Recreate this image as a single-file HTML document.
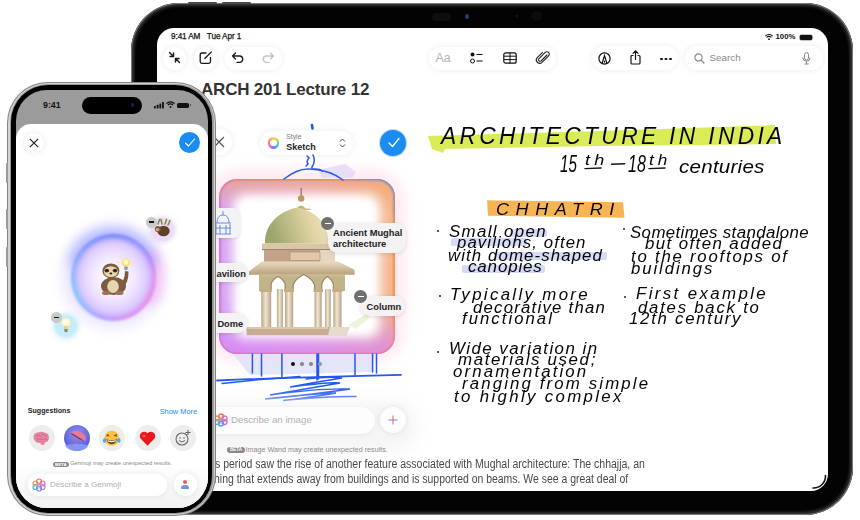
<!DOCTYPE html>
<html><head><meta charset="utf-8">
<style>
*{margin:0;padding:0;box-sizing:border-box}
html,body{width:860px;height:520px;overflow:hidden;background:#fff;font-family:"Liberation Sans",sans-serif;position:relative}
.a{position:absolute}
.nw{white-space:nowrap;line-height:1}
#ipad{left:131px;top:3px;width:722px;height:512px;border-radius:48px;background:#030303;box-shadow:inset 0 0 0 1px #7a7a7a,inset 0 0 3px 3px #383838}
#iscr{left:157px;top:28px;width:671px;height:463px;border-radius:17px;overflow:hidden;background:#fff}
#iin{left:-157px;top:-28px;width:860px;height:520px}
#iph{left:7px;top:82px;width:209px;height:434px;border-radius:41px;background:#858585}
#iph1{left:8px;top:83px;width:207px;height:432px;border-radius:40px;background:#d4d4d4}
#iph2{left:9.5px;top:84px;width:204px;height:430px;border-radius:38px;background:#9a9a9a}
#iphb{left:11px;top:85px;width:201px;height:427.5px;border-radius:37px;background:#000}
#pscr{left:16px;top:90px;width:192px;height:418px;border-radius:31px;overflow:hidden;background:#9b9b9b}
#pin{left:-16px;top:-90px;width:860px;height:520px}
.btn{border-radius:50%;background:#fff;box-shadow:0 0 6px rgba(0,0,0,.09)}
.pill{background:#fff;box-shadow:0 0 6px rgba(0,0,0,.08)}
.hw{font-family:"Liberation Sans",sans-serif;font-style:italic;color:#050505;white-space:nowrap;line-height:1;transform-origin:0 0}
svg{position:absolute;overflow:visible}
.lab{background:#f4f2f3;border-radius:10px;box-shadow:0 1px 4px rgba(0,0,0,.12);font-weight:bold;color:#222;font-size:9.3px}
.minus{width:13px;height:13px;border-radius:50%;background:#707070}
.minus:after{content:"";position:absolute;left:3.5px;top:6px;width:6px;height:1.3px;background:#fff}
</style></head><body>

<!-- iPad -->
<div id="ipad" class="a"></div>
<div class="a" style="left:187.5px;top:1.8px;width:29px;height:2px;border-radius:1px;background:#4a4a4a"></div>
<div class="a" style="left:222.3px;top:1.8px;width:29px;height:2px;border-radius:1px;background:#4a4a4a"></div>
<div class="a" style="left:465px;top:14px;width:4px;height:5px;border-radius:50%;background:#2a3a80"></div>
<div class="a" style="left:432px;top:12.5px;width:19px;height:8px;border-radius:4px;background:#0e0e0e"></div>
<div class="a" style="left:516px;top:15px;width:2px;height:2px;border-radius:50%;background:#1e1e1e"></div>
<div class="a" style="left:531px;top:11px;width:11px;height:10px;border-radius:50%;background:#0c0c0c"></div>
<div id="iscr" class="a"><div id="iin" class="a">
  <!-- status -->
  <div class="a nw" style="left:171px;top:32.5px;font-size:8.2px;color:#111;letter-spacing:-0.1px;-webkit-text-stroke:0.25px #111">9:41 AM&nbsp;&nbsp;&nbsp;Tue Apr 1</div>
  <svg style="left:765px;top:34px" width="8" height="6" viewBox="0 0 8 6"><path d="M0.3 2.2 A5 5 0 0 1 7.7 2.2 M1.6 3.5 A3.2 3.2 0 0 1 6.4 3.5" stroke="#111" stroke-width="1.1" fill="none"/><circle cx="4" cy="5.2" r="0.9" fill="#111"/></svg>
  <div class="a nw" style="left:775.5px;top:33px;font-size:7.8px;font-weight:bold;color:#111">100%</div>
  <div class="a" style="left:799.5px;top:34.5px;width:12px;height:5.3px;border-radius:1.2px;background:#111;box-shadow:0 0 0 0.6px #888"></div>
  <div class="a" style="left:812px;top:36px;width:1px;height:2.5px;background:#999"></div>
  <!-- toolbar -->
  <div class="a btn" style="left:163px;top:46.5px;width:23px;height:23px"></div>
  <svg style="left:168px;top:51px" width="13" height="13" viewBox="0 0 13 13"><path d="M1.5 1.5 L5.5 5.5 M5.5 2 V5.5 H2 M11.5 11.5 L7.5 7.5 M7.5 11 V7.5 H11" stroke="#1a1a1a" stroke-width="1.4" fill="none" stroke-linecap="round" stroke-linejoin="round"/></svg>
  <div class="a btn" style="left:194px;top:46.5px;width:23px;height:23px"></div>
  <svg style="left:199px;top:51px" width="13" height="13" viewBox="0 0 13 13"><path d="M7 2 H3 Q1.2 2 1.2 3.8 V10.5 Q1.2 12.3 3 12.3 H9.7 Q11.5 12.3 11.5 10.5 V6.5" stroke="#1a1a1a" stroke-width="1.3" fill="none" stroke-linecap="round"/><path d="M5.8 7.5 L12.3 1" stroke="#1a1a1a" stroke-width="1.3" stroke-linecap="round"/></svg>
  <div class="a pill" style="left:225px;top:46.5px;width:57px;height:23px;border-radius:12px"></div>
  <svg style="left:231px;top:51px" width="14" height="13" viewBox="0 0 14 13"><path d="M4.5 2 L1.5 5 L4.5 8 M1.5 5 H8.5 A3.2 3.2 0 0 1 8.5 11.4 H6" stroke="#1a1a1a" stroke-width="1.4" fill="none" stroke-linecap="round" stroke-linejoin="round"/></svg>
  <svg style="left:261px;top:51px" width="14" height="13" viewBox="0 0 14 13"><path d="M9.5 2 L12.5 5 L9.5 8 M12.5 5 H5.5 A3.2 3.2 0 0 0 5.5 11.4 H8" stroke="#c4c4c4" stroke-width="1.4" fill="none" stroke-linecap="round" stroke-linejoin="round"/></svg>

  <div class="a pill" style="left:429px;top:46.5px;width:127px;height:23px;border-radius:12px"></div>
  <div class="a nw" style="left:435.5px;top:52px;font-size:12.4px;color:#b4b4b4">Aa</div>
  <svg style="left:470px;top:52px" width="14" height="12" viewBox="0 0 14 12"><circle cx="2.5" cy="2.5" r="2" fill="#111"/><circle cx="2.5" cy="9" r="2" stroke="#111" stroke-width="1" fill="none"/><path d="M6.5 2.5 H12.5 M6.5 9 H12.5" stroke="#111" stroke-width="1.2"/></svg>
  <svg style="left:503px;top:52px" width="14" height="12" viewBox="0 0 14 12"><rect x="0.8" y="0.8" width="12.4" height="10.4" rx="2" stroke="#111" stroke-width="1.2" fill="none"/><path d="M0.8 4.2 H13.2 M0.8 7.6 H13.2 M7 0.8 V11.2" stroke="#111" stroke-width="1"/></svg>
  <svg style="left:536px;top:51px" width="14" height="14" viewBox="0 0 14 14"><path d="M11 4 L5 10 A1.6 1.6 0 0 1 2.8 7.8 L9.2 1.4 A2.4 2.4 0 0 1 12.6 4.8 L6 11.4 A3.4 3.4 0 0 1 1.2 6.6 L6.5 1.3" stroke="#222" stroke-width="1.1" fill="none" stroke-linecap="round"/></svg>

  <div class="a pill" style="left:592px;top:46px;width:86px;height:24px;border-radius:12px"></div>
  <svg style="left:598px;top:52px" width="13" height="13" viewBox="0 0 13 13"><circle cx="6.5" cy="6.5" r="5.6" stroke="#111" stroke-width="1.2" fill="none"/><path d="M4.2 11 L6.5 3.5 L8.8 11" stroke="#111" stroke-width="1.2" fill="none"/><path d="M5.6 8.8 L6.5 11.5 L7.4 8.8Z" fill="#111"/></svg>
  <svg style="left:630px;top:50px" width="11" height="15" viewBox="0 0 11 15"><path d="M3.5 5.5 H2 Q1 5.5 1 6.5 V13 Q1 14 2 14 H9 Q10 14 10 13 V6.5 Q10 5.5 9 5.5 H7.5" stroke="#111" stroke-width="1.2" fill="none"/><path d="M5.5 9.5 V1 M3 3.3 L5.5 0.8 L8 3.3" stroke="#111" stroke-width="1.2" fill="none" stroke-linecap="round"/></svg>
  <div class="a" style="left:660px;top:57.5px;width:2.5px;height:2.5px;border-radius:50%;background:#111;box-shadow:4.5px 0 0 #111,9px 0 0 #111"></div>

  <div class="a pill" style="left:685px;top:46px;width:138px;height:24px;border-radius:12px"></div>
  <svg style="left:694px;top:52.5px" width="11" height="11" viewBox="0 0 11 11"><circle cx="4.5" cy="4.5" r="3.6" stroke="#8a8a8a" stroke-width="1.2" fill="none"/><path d="M7.2 7.2 L10 10" stroke="#8a8a8a" stroke-width="1.3" stroke-linecap="round"/></svg>
  <div class="a nw" style="left:709.5px;top:53.3px;font-size:9.9px;color:#8a8a8a">Search</div>
  <svg style="left:802px;top:51.5px" width="9" height="13" viewBox="0 0 9 13"><rect x="2.5" y="0.6" width="4" height="7.4" rx="2" stroke="#888" stroke-width="1" fill="none"/><path d="M0.8 5.5 A3.7 3.7 0 0 0 8.2 5.5 M4.5 9.2 V12 M2.5 12 H6.5" stroke="#888" stroke-width="1" fill="none"/></svg>

  <!-- title -->
  <div class="a nw" style="left:201px;top:80.5px;font-size:17px;font-weight:bold;color:#333;letter-spacing:-0.2px">ARCH 201 Lecture 12</div>

  <!-- highlighters -->
  <svg style="left:0;top:0" width="860" height="520"><path d="M428 136 L600 131 L775 125 L776 144 L600 146 L445 149 L443 153 L432 149 Z" fill="#d9ec58"/></svg>
  <svg style="left:0;top:0" width="860" height="520"><path d="M487 200.3 L623 202.3 L624.5 217.7 L488 215.7 Z" fill="#f6b552"/></svg>

  <!-- handwriting -->
  <div class="a" style="left:509.5px;top:229px;width:37.5px;height:7.8px;background:#d6dbf8;border-radius:2px"></div>
  <div class="a" style="left:451px;top:238px;width:76px;height:7.6px;background:#d6dbf8;border-radius:2px"></div>
  <div class="a" style="left:494px;top:252px;width:112.8px;height:7.8px;background:#d6dbf8;border-radius:2px"></div>
  <div class="a" style="left:462px;top:265.3px;width:83px;height:7.7px;background:#d6dbf8;border-radius:2px"></div>
  <div class="a" style="left:436.8px;top:229.7px;width:2px;height:2px;border-radius:50%;background:#222"></div>
  <div class="a" style="left:439px;top:295px;width:2px;height:2px;border-radius:50%;background:#222"></div>
  <div class="a" style="left:436.5px;top:350.7px;width:2px;height:2px;border-radius:50%;background:#222"></div>
  <div class="a" style="left:623.3px;top:227.9px;width:2px;height:2px;border-radius:50%;background:#222"></div>
  <div class="a" style="left:623.8px;top:295.8px;width:2px;height:2px;border-radius:50%;background:#222"></div>
  <!--HW-->
  <div class="a hw" style="left:441.0px;top:122.7px;font-size:19px;letter-spacing:2.78px;transform:scale(1.199,1.3)">ARCHITECTURE IN INDIA</div>
  <div class="a hw" style="left:679.3px;top:156.9px;font-size:17px;letter-spacing:0.20px;transform:scale(1.210,1.13)">centuries</div>
  <div class="a hw" style="left:495.5px;top:199.9px;font-size:15px;letter-spacing:5.50px;transform:scale(1.200,1.14)">CHHATRI</div>
  <div class="a hw" style="left:448.7px;top:223.3px;font-size:14px;letter-spacing:1.13px;transform:scale(1.203,1.16)">Small open</div>
  <div class="a hw" style="left:456.5px;top:233.7px;font-size:14px;letter-spacing:0.92px;transform:scale(1.198,1.16)">pavilions, often</div>
  <div class="a hw" style="left:447.6px;top:247.0px;font-size:14px;letter-spacing:0.93px;transform:scale(1.199,1.16)">with dome-shaped</div>
  <div class="a hw" style="left:467.6px;top:258.0px;font-size:14px;letter-spacing:0.68px;transform:scale(1.215,1.16)">canopies</div>
  <div class="a hw" style="left:449.8px;top:286.0px;font-size:14px;letter-spacing:1.94px;transform:scale(1.203,1.16)">Typically more</div>
  <div class="a hw" style="left:473.1px;top:299.2px;font-size:14px;letter-spacing:1.04px;transform:scale(1.195,1.16)">decorative than</div>
  <div class="a hw" style="left:462.0px;top:310.3px;font-size:14px;letter-spacing:1.72px;transform:scale(1.192,1.16)">functional</div>
  <div class="a hw" style="left:448.8px;top:339.8px;font-size:14px;letter-spacing:1.22px;transform:scale(1.205,1.16)">Wide variation in</div>
  <div class="a hw" style="left:458.0px;top:350.5px;font-size:14px;letter-spacing:1.34px;transform:scale(1.208,1.16)">materials used;</div>
  <div class="a hw" style="left:452.7px;top:363.4px;font-size:14px;letter-spacing:1.77px;transform:scale(1.203,1.16)">ornamentation</div>
  <div class="a hw" style="left:462.0px;top:374.6px;font-size:14px;letter-spacing:1.78px;transform:scale(1.200,1.16)">ranging from simple</div>
  <div class="a hw" style="left:454.2px;top:388.0px;font-size:14px;letter-spacing:1.95px;transform:scale(1.201,1.16)">to highly complex</div>
  <div class="a hw" style="left:630.1px;top:223.5px;font-size:14px;letter-spacing:0.33px;transform:scale(1.202,1.16)">Sometimes standalone</div>
  <div class="a hw" style="left:645.2px;top:235.1px;font-size:14px;letter-spacing:1.17px;transform:scale(1.204,1.16)">but often added</div>
  <div class="a hw" style="left:631.2px;top:248.0px;font-size:14px;letter-spacing:1.47px;transform:scale(1.199,1.16)">to the rooftops of</div>
  <div class="a hw" style="left:631.3px;top:259.6px;font-size:14px;letter-spacing:1.60px;transform:scale(1.197,1.16)">buildings</div>
  <div class="a hw" style="left:636.0px;top:285.1px;font-size:14px;letter-spacing:1.96px;transform:scale(1.206,1.16)">First example</div>
  <div class="a hw" style="left:638.3px;top:298.7px;font-size:14px;letter-spacing:1.48px;transform:scale(1.197,1.16)">dates back to</div>
  <div class="a hw" style="left:629.0px;top:310.3px;font-size:14px;letter-spacing:1.45px;transform:scale(1.199,1.16)">12th century</div>
  <!--/HW-->
  <div class="a hw" style="left:559.8px;top:152.1px;font-size:21px;transform:scale(0.726,1.107)">15</div>
  <div class="a hw" style="left:627.6px;top:152.1px;font-size:21px;transform:scale(0.765,1.107)">18</div>
  <div class="a hw" style="left:584.9px;top:153.1px;font-size:13px;letter-spacing:3px;transform:scale(1.39,1.08)">th</div>
  <div class="a hw" style="left:649.2px;top:153.1px;font-size:13px;letter-spacing:3px;transform:scale(1.325,1.08)">th</div>
  <svg style="left:0;top:0" width="860" height="520"><path d="M585 168.6 L601 168 M649 168.6 L665 168 M611.6 164.3 L624.7 163.8" stroke="#151515" stroke-width="1.4" stroke-linecap="round"/></svg>
  <!-- image wand panel -->
  <div class="a btn" style="left:206px;top:129px;width:26px;height:26px"></div>
  <svg style="left:213px;top:136px" width="12" height="12" viewBox="0 0 12 12"><path d="M1 1 L11 11 M11 1 L1 11" stroke="#555" stroke-width="1.2"/></svg>
  <div class="a pill" style="left:260px;top:130.5px;width:93px;height:24.5px;border-radius:12.5px"></div>
  <div class="a" style="left:267.5px;top:137px;width:11.5px;height:11.5px;border-radius:50%;background:conic-gradient(#ffd84a,#9be05a,#4ac0f0,#7a7af0,#f070c0,#ff8a50,#ffd84a)"></div>
  <div class="a" style="left:270px;top:139.5px;width:6.5px;height:6.5px;border-radius:50%;background:#fff"></div>
  <div class="a nw" style="left:286.3px;top:134px;font-size:6.8px;color:#7a7a7a">Style</div>
  <div class="a nw" style="left:286.3px;top:142.5px;font-size:9px;font-weight:bold;color:#1e1e1e">Sketch</div>
  <svg style="left:339px;top:138px" width="7" height="10" viewBox="0 0 7 10"><path d="M1 3.5 L3.5 1 L6 3.5 M1 6.5 L3.5 9 L6 6.5" stroke="#444" stroke-width="1" fill="none"/></svg>
  <div class="a" style="left:380.3px;top:129.7px;width:26px;height:26px;border-radius:50%;background:#1b8df2;box-shadow:0 0 0 1px rgba(20,100,200,.25)"></div>
  <svg style="left:386.5px;top:136px" width="14" height="13" viewBox="0 0 14 13"><path d="M2 7 L5.5 10.5 L12 2.5" stroke="#fff" stroke-width="1.3" fill="none" stroke-linecap="round" stroke-linejoin="round"/></svg>

  <!-- card glow + border -->
  <div class="a" style="left:208px;top:170px;width:196px;height:192px;border-radius:30px;background:rgba(255,205,225,.45);filter:blur(7px)"></div>
  <div class="a" style="left:218.5px;top:178.5px;width:176px;height:175px;border-radius:18px;background:linear-gradient(90deg,#c878e0 0%,#f08070 30%,#f48a58 70%,#f59050 100%)"></div>
  <div class="a" style="left:218.5px;top:178.5px;width:176px;height:175px;border-radius:18px;background:linear-gradient(180deg,rgba(245,130,70,.5) 0%,rgba(0,0,0,0) 20%,rgba(0,0,0,0) 75%,rgba(220,110,220,.8) 100%)"></div>
  <div class="a" style="left:345px;top:178.5px;width:49.5px;height:60px;border-radius:0 18px 0 0;background:linear-gradient(215deg,#5a90e0 0%,rgba(90,144,224,0) 55%)"></div>
  <div class="a" style="left:220.5px;top:181px;width:172px;height:170.5px;border-radius:16px;background:linear-gradient(90deg,#d6a6f4 0%,#e4b4e4 45%,#f6b888 100%);filter:blur(1px)"></div>
  <div class="a" style="left:220.5px;top:181px;width:172px;height:170.5px;border-radius:16px;background:linear-gradient(180deg,rgba(246,160,110,.6) 0%,rgba(246,160,110,0) 18%,rgba(214,140,244,0) 70%,rgba(214,130,244,.75) 100%);filter:blur(1px)"></div>
  <div class="a" style="left:233px;top:194px;width:147px;height:144px;border-radius:12px;background:#fff;filter:blur(6px)"></div>
  <div class="a" style="left:240px;top:201px;width:133px;height:130px;border-radius:10px;background:#fff;filter:blur(4px)"></div>
  <!-- chhatri -->
  <svg style="left:0;top:0" width="860" height="520">
    <defs>
      <linearGradient id="dome" x1="0" x2="1" y1="0.2" y2="0"><stop offset="0" stop-color="#9ca66a"/><stop offset="0.35" stop-color="#c2c08a"/><stop offset="0.65" stop-color="#e2d4a4"/><stop offset="1" stop-color="#efe4c4"/></linearGradient>
      <linearGradient id="pil" x1="0" x2="1" y1="0" y2="0"><stop offset="0" stop-color="#b9a488"/><stop offset="0.45" stop-color="#f0e6d2"/><stop offset="1" stop-color="#b8a084"/></linearGradient>
      <linearGradient id="eave" x1="0" x2="0" y1="0" y2="1"><stop offset="0" stop-color="#eadcc0"/><stop offset="1" stop-color="#b8a07c"/></linearGradient>
    </defs>
    <path d="M301.2 188 V200" stroke="#8a7048" stroke-width="1.2"/>
    <circle cx="301.2" cy="198.5" r="3.2" fill="#b89a68"/>
    <path d="M296 209 Q301 202 306 209 Z" fill="#c8b080"/>
    <path d="M294 208.5 H309 L312 210 H291 Z" fill="#d0b888"/>
    <path d="M265 243.5 C264 224 280 211 297 207.5 C316 211 329 224 328 243.5 Z" fill="url(#dome)"/>
    <rect x="262" y="243.5" width="68" height="6.5" fill="#d9c6a8"/>
    <rect x="262" y="249" width="68" height="1.2" fill="#a08468"/>
    <path d="M264 250 H335 V262 H264 Z" fill="#c4a288"/>
    <path d="M320 250 H335 V262 H320 Z" fill="#e4d6c0"/>
    <rect x="290" y="252" width="30" height="8.5" fill="#e0c8aa" stroke="#a88a70" stroke-width="0.6"/>
    <path d="M262 261.5 H338 L354.6 269.8 V274.7 H249 V271.4 Z" fill="url(#eave)"/>
    <path d="M259 274.7 H345 V291 H259 Z" fill="#c0b488"/>
    <path d="M262 274.7 H345 V277 H262 Z" fill="#c8b890"/>
    <path d="M271.2 291 V284 Q272.5 279.5 278 276.5 Q283.5 279.5 285 284 V291 Z M293.2 291 V285 Q295 279 303.8 274.5 Q312.5 279 314.5 285 V291 Z M321.8 291 V284 Q323 279.5 327.5 276.5 Q332 279.5 333.3 284 V291 Z" fill="#fff"/>
    <path d="M271.2 291 V284 Q272.5 279.5 278 276.5 Q283.5 279.5 285 284 V291 M293.2 291 V285 Q295 279 303.8 274.5 Q312.5 279 314.5 285 V291 M321.8 291 V284 Q323 279.5 327.5 276.5 Q332 279.5 333.3 284 V291" stroke="#8a7048" stroke-width="1.1" fill="none" opacity="0.8"/>
    <rect x="271.2" y="291" width="5.7" height="36" fill="#fff"/>
    <rect x="293.2" y="291" width="21.3" height="36" fill="#fff"/>
    <rect x="321.8" y="291" width="3.3" height="36" fill="#fff"/>
    <rect x="330.8" y="291" width="2.5" height="36" fill="#fff"/>
    <rect x="261.3" y="289" width="9.9" height="38" fill="url(#pil)"/>
    <rect x="276.9" y="289" width="6" height="38" fill="url(#pil)"/>
    <rect x="285" y="289" width="8.2" height="38" fill="url(#pil)"/>
    <rect x="314.5" y="289" width="7.3" height="38" fill="url(#pil)"/>
    <rect x="325.1" y="289" width="5.7" height="38" fill="url(#pil)"/>
    <rect x="333.3" y="289" width="8.2" height="38" fill="url(#pil)"/>
    <path d="M260 289 H272 V292 H260 Z M284 289 H294 V292 H284 Z M313.5 289 H323 V292 H313.5 Z M332.3 289 H342.5 V292 H332.3 Z" fill="#c4ac84"/>
    <path d="M246.6 327 H349.6 L346 335.2 H246.6 Z" fill="#c9ad92"/>
    <path d="M246.6 327 H328 V329 H246.6 Z" fill="#dcc8b0"/>
    <path d="M330 327 H349.6 L346 335.2 H328 Z" fill="#e6dccc"/>
    <path d="M348 325 L366 314 L370 317 L356 329 Z" fill="#d4e8b0" opacity="0.45"/>
  </svg>
  <!-- thumb + labels -->
  <div class="a" style="left:212px;top:208px;width:28px;height:30px;border-radius:7px;background:#f3f3f5;box-shadow:0 1px 3px rgba(0,0,0,.1)"></div>
  <svg style="left:214px;top:210px" width="20" height="26" viewBox="0 0 20 26"><path d="M9 1 V5 M3 13 Q3 5 9 5 Q15 5 15 13 M1 13 H17 M2 14 V24 M16 14 V24 M6 15 V24 M12 15 V24 M1 24 H17 M1 18 H17" stroke="#5a80e8" stroke-width="0.9" fill="none"/></svg>
  <div class="a lab" style="left:327.8px;top:222.8px;width:78.7px;height:30.2px"></div>
  <div class="a nw" style="left:333px;top:227.8px;font-size:9.3px;font-weight:bold;color:#222;line-height:11.6px">Ancient Mughal<br>architecture</div>
  <div class="a minus" style="left:321px;top:216.5px"></div>
  <div class="a lab" style="left:205px;top:263px;width:43.4px;height:19.4px"></div>
  <div class="a nw" style="left:216.5px;top:269.5px;font-size:9.3px;font-weight:bold;color:#222">avilion</div>
  <div class="a lab" style="left:360px;top:295.7px;width:45.3px;height:20.3px"></div>
  <div class="a nw" style="left:366.5px;top:302.8px;font-size:9.3px;font-weight:bold;color:#222">Column</div>
  <div class="a minus" style="left:354px;top:290px"></div>
  <div class="a lab" style="left:205px;top:313px;width:43.4px;height:20px"></div>
  <div class="a nw" style="left:217.4px;top:319.8px;font-size:9.3px;font-weight:bold;color:#222">Dome</div>

  <!-- sketch below -->
  <svg style="left:0;top:0" width="860" height="520">
    <path d="M233 354 L374 354 L372 372 L250 375 Z" fill="#dfe2f8" opacity="0.85"/>
    <path d="M318 170 L345 164 L356 172 L352 178 L322 178 Z" fill="#e2d8f6" opacity="0.8"/>
    <g stroke="#2458ee" stroke-width="1.5" fill="none" stroke-linecap="round">
      <path d="M312 125 L312.5 128.5" stroke-width="2.6"/>
      <path d="M307 156 L309 158 Q306 161 308 164 L306 166 M313 155 Q316 161 312 167 Q311 170 315 169 Q320 169 322 171"/>
      <path d="M284 179 Q298 168 310 169 Q330 170 343 180"/>
      <path d="M252.4 354 V373 M261.5 354 V376 M281.9 354 V378 M317 354 V380 M318.5 354 V379 M355 354 V375 M372.6 354 V372 M376.5 354 V373"/>
      <path d="M217 380.5 Q300 377 401 374.8" stroke-width="1.8"/>
      <path d="M222 383.5 Q260 379 300 376.5"/>
      <path d="M306 379 Q330 376 342 378 Q322 381 290 387 Q330 382 340 383 Q300 390 270 395 Q320 388 350 389 Q300 396 265 399 Q310 394 336 393 Q300 399 283 400.5 Q330 396 356 396.5"/>
    </g>
  </svg>
  <div class="a" style="left:290.8px;top:361.8px;width:4px;height:4px;border-radius:50%;background:#111"></div>
  <div class="a" style="left:300px;top:362px;width:3.6px;height:3.5px;border-radius:50%;background:#8a8a8a"></div>
  <div class="a" style="left:309.1px;top:362px;width:3.6px;height:3.5px;border-radius:50%;background:#8a8a8a"></div>
  <div class="a" style="left:318px;top:362px;width:3.6px;height:3.5px;border-radius:50%;background:#9a9a9a"></div>

  <!-- input -->
  <div class="a" style="left:196px;top:401px;width:220px;height:50px;border-radius:20px;background:#f5f5f5;filter:blur(8px)"></div>
  <div class="a pill" style="left:200px;top:407px;width:175px;height:27px;border-radius:14px;background:#fdfdfd;box-shadow:0 1px 4px rgba(0,0,0,.06)"></div>
  <svg style="left:214px;top:413px" width="14" height="14" viewBox="0 0 14 14"><g fill="none" stroke-width="1.3"><circle cx="7" cy="3.5" r="2.5" stroke="#f07050"/><circle cx="10.5" cy="5.5" r="2.5" stroke="#f070a0"/><circle cx="10.5" cy="9" r="2.5" stroke="#c070f0"/><circle cx="7" cy="10.5" r="2.5" stroke="#6a8af0"/><circle cx="3.5" cy="9" r="2.5" stroke="#40b0f0"/><circle cx="3.5" cy="5.5" r="2.5" stroke="#f09050"/></g></svg>
  <div class="a nw" style="left:231px;top:415px;font-size:9.7px;color:#b2b2b2">Describe an image</div>
  <div class="a btn" style="left:380px;top:407px;width:26px;height:26px;background:#fdfdfd"></div>
  <svg style="left:388px;top:415px" width="10" height="10" viewBox="0 0 10 10"><path d="M5 0.5 V9.5" stroke="#f06a6a" stroke-width="1.1"/><path d="M0.5 5 H9.5" stroke="#8a8ae0" stroke-width="1.1"/></svg>
  <div class="a nw" style="left:227px;top:447px;width:18px;height:5.8px;border-radius:3px;background:#8a8a8a;font-size:4.6px;font-weight:bold;color:#fff;text-align:center;line-height:5.8px">BETA</div>
  <div class="a nw" style="left:245.5px;top:446px;font-size:7.2px;color:#8a8a8a">Image Wand may create unexpected results.</div>

  <!-- body text -->
  <div class="a nw" style="left:214.7px;top:458px;font-size:12px;color:#484848;transform:scaleX(0.876);transform-origin:0 0">s period saw the rise of another feature associated with Mughal architecture: The chhajja, an</div>
  <div class="a nw" style="left:214px;top:473.1px;font-size:12px;color:#484848;transform:scaleX(0.870);transform-origin:0 0">ning that extends away from buildings and is supported on beams. We see a great deal of</div>
  <!-- corner mark -->
  <svg style="left:811px;top:474px" width="16" height="16" viewBox="0 0 16 16"><path d="M14.5 1.5 A12 12 0 0 1 2 14" stroke="#111" stroke-width="1.6" fill="none" stroke-linecap="round"/></svg>
</div></div>

<!-- iPhone -->
<div id="iph" class="a"></div>
<div id="iph1" class="a"></div>
<div id="iph2" class="a"></div>
<div id="iphb" class="a"></div>
<div class="a" style="left:6px;top:163px;width:1.5px;height:20px;border-radius:1px;background:#9a9a9a"></div>
<div class="a" style="left:6px;top:209px;width:1.5px;height:20px;border-radius:1px;background:#9a9a9a"></div>
<div class="a" style="left:6px;top:246.5px;width:1.5px;height:20px;border-radius:1px;background:#9a9a9a"></div>
<div id="pscr" class="a"><div id="pin" class="a">
  <div class="a nw" style="left:43px;top:101px;font-size:8.8px;font-weight:bold;color:#111">9:41</div>
  <div class="a" style="left:82px;top:96.5px;width:60px;height:17.5px;border-radius:9px;background:#000"></div>
  <div class="a" style="left:131px;top:103px;width:3px;height:4px;border-radius:50%;background:#1a2060"></div>
  <svg style="left:153.5px;top:102px" width="10" height="6.5" viewBox="0 0 10 6.5"><rect x="0" y="4" width="1.8" height="2.5" rx="0.4" fill="#111"/><rect x="2.7" y="2.8" width="1.8" height="3.7" rx="0.4" fill="#111"/><rect x="5.4" y="1.5" width="1.8" height="5" rx="0.4" fill="#111"/><rect x="8.1" y="0" width="1.8" height="6.5" rx="0.4" fill="#111"/></svg>
  <svg style="left:165.5px;top:101px" width="9" height="7" viewBox="0 0 9 7"><path d="M0.4 2.6 A5.6 5.6 0 0 1 8.6 2.6 M1.9 4.1 A3.5 3.5 0 0 1 7.1 4.1" stroke="#111" stroke-width="1.2" fill="none"/><circle cx="4.5" cy="6" r="1" fill="#111"/></svg>
  <div class="a" style="left:176.5px;top:102.5px;width:12px;height:5.2px;border-radius:1.6px;background:#111"></div>
  <div class="a" style="left:189.5px;top:104px;width:1px;height:2px;background:#555"></div>
  <!-- sheet -->
  <div class="a" style="left:16px;top:124px;width:192px;height:400px;border-radius:15px 15px 0 0;background:#fff"></div>
  <div class="a" style="left:16px;top:465px;width:192px;height:45px;background:linear-gradient(180deg,#fff,#f1f1f1)"></div>
  <div class="a btn" style="left:23.5px;top:132.5px;width:20.5px;height:20.5px"></div>
  <svg style="left:29px;top:138px" width="10" height="10" viewBox="0 0 10 10"><path d="M0.8 0.8 L9.2 9.2 M9.2 0.8 L0.8 9.2" stroke="#222" stroke-width="1.2"/></svg>
  <div class="a" style="left:179.3px;top:132px;width:21px;height:21px;border-radius:50%;background:#1b8df2"></div>
  <svg style="left:184px;top:137px" width="12" height="11" viewBox="0 0 12 11"><path d="M1.5 6 L4.5 9 L10.5 2" stroke="#fff" stroke-width="1.1" fill="none" stroke-linecap="round" stroke-linejoin="round"/></svg>
  <!-- glow -->
  <div class="a" style="left:52px;top:214px;width:122px;height:124px;border-radius:50%;background:radial-gradient(closest-side,rgba(190,180,255,.6) 62%,rgba(215,200,255,.3) 78%,rgba(255,255,255,0) 100%);filter:blur(2px)"></div>
  <div class="a" style="left:67px;top:226px;width:92px;height:40px;border-radius:50% 50% 0 0/100% 100% 0 0;background:rgba(110,130,255,.35);filter:blur(5px)"></div>
  <div class="a" style="left:138px;top:250px;width:26px;height:56px;border-radius:50%;background:rgba(250,120,220,.3);filter:blur(5px)"></div>
  <div class="a" style="left:70.5px;top:233.5px;width:85px;height:87px;border-radius:50%;background:conic-gradient(from 0deg,#5a7aff,#8a80ff 12%,#e088f0 25%,#f47ad8 35%,#d880e8 45%,#a890ff 55%,#60c8ff 68%,#80a8ff 80%,#6a88ff 90%,#5a7aff);filter:blur(1.2px);opacity:.8"></div>
  <div class="a" style="left:74.5px;top:237.5px;width:77px;height:79px;border-radius:50%;background:radial-gradient(closest-side,#fff 0%,#fcf8ff 25%,#efe4ff 60%,#dccaff 88%,#c8b6ff 100%);filter:blur(2.6px)"></div>
  <!-- sloth -->
  <svg style="left:0;top:0" width="240" height="520">
    <g stroke="#ffd860" stroke-width="0.8" opacity="0.9"><path d="M126 256.5 V254.5 M121.5 258 L120 256.5 M130.5 258 L132 256.5 M119.5 262.5 H117.5 M132.5 262.5 H134.5"/></g>
    <circle cx="126" cy="262.6" r="4.4" fill="#ffe27a"/>
    <circle cx="126" cy="262" r="2.4" fill="#fff6c8"/>
    <rect x="124.3" y="266.5" width="3.4" height="3.5" rx="1" fill="#8a9ab0"/>
    <path d="M119 285 Q125 281 125 271 L128.5 271.5 Q129 284 121 289 Z" fill="#7e5a3e"/>
    <ellipse cx="113.5" cy="286" rx="12.5" ry="9" fill="#7e5a3e"/>
    <ellipse cx="113" cy="286.5" rx="5.8" ry="6.5" fill="#e6d4b0"/>
    <ellipse cx="106" cy="293" rx="4" ry="2" fill="#9a7658"/>
    <ellipse cx="119.5" cy="293" rx="4" ry="2" fill="#9a7658"/>
    <ellipse cx="110.9" cy="270.8" rx="8.5" ry="7.4" fill="#7e5a3e"/>
    <ellipse cx="110.9" cy="271.6" rx="7" ry="5.4" fill="#e8d8b2"/>
    <ellipse cx="106.8" cy="270.6" rx="2.4" ry="1.9" fill="#5a3a26"/>
    <ellipse cx="115" cy="270.6" rx="2.4" ry="1.9" fill="#5a3a26"/>
    <circle cx="106.8" cy="270.5" r="1" fill="#111"/>
    <circle cx="115" cy="270.5" r="1" fill="#111"/>
    <ellipse cx="110.9" cy="273.4" rx="1.4" ry="1" fill="#222"/>
  </svg>
  <!-- small bubbles -->
  <div class="a" style="left:150.5px;top:218px;width:23px;height:23px;border-radius:50%;background:#ecdcf6;box-shadow:0 0 4px 2px rgba(225,200,245,.6)"></div>
  <svg style="left:0;top:0" width="240" height="520">
    <path d="M158 224 L159.5 219.5 M162 224 L161 219.5 M165 224 L166.5 219.5 M168 225 L170 220.5" stroke="#8a8a48" stroke-width="1.6" stroke-linecap="round"/>
    <ellipse cx="163.5" cy="231" rx="6.2" ry="5.3" fill="#5e4228"/>
    <ellipse cx="157.8" cy="229" rx="3" ry="3" fill="#7a5a3a"/>
    <ellipse cx="157.5" cy="229.5" rx="1.8" ry="1.6" fill="#c8b088"/>
  </svg>
  <div class="a" style="left:145.6px;top:216.6px;width:11px;height:11px;border-radius:50%;background:#c9c9c9"></div>
  <div class="a" style="left:148.6px;top:221.4px;width:5px;height:1.3px;background:#111"></div>
  <div class="a" style="left:53.5px;top:314px;width:24px;height:24px;border-radius:50%;background:radial-gradient(circle,#c6ecfa 50%,#d8f2fb 80%,rgba(216,242,251,.6) 100%);box-shadow:0 0 4px 2px rgba(200,235,250,.6)"></div>
  <svg style="left:0;top:0" width="240" height="520">
    <circle cx="66" cy="322.5" r="4.6" fill="#fff3b0"/>
    <circle cx="66" cy="322" r="3" fill="#fffbe8"/>
    <path d="M64 326 H68 V330 H64 Z" fill="#e8d890"/>
    <path d="M64.3 329 H67.7 V331.5 Q66 333 64.3 331.5 Z" fill="#8a8a8a"/>
  </svg>
  <div class="a" style="left:50.6px;top:312px;width:11px;height:11px;border-radius:50%;background:#c9c9c9"></div>
  <div class="a" style="left:53.6px;top:316.8px;width:5px;height:1.3px;background:#111"></div>
  <!-- suggestions -->
  <div class="a nw" style="left:27.8px;top:408px;font-size:7.1px;font-weight:bold;color:#222">Suggestions</div>
  <div class="a nw" style="left:159.7px;top:408px;font-size:7.4px;color:#1b8df2">Show More</div>
  <div class="a" style="left:28.5px;top:425px;width:26px;height:26px;border-radius:50%;background:#ededed"></div>
  <svg style="left:0;top:0" width="240" height="520">
    <path d="M33.5 438 Q33 432.5 39 432.3 Q42 431 45 432.8 Q49.5 433.5 48.8 438.5 Q48.5 442 45 442.5 L44 445 L41 444.8 L40.5 443 Q35 443.5 33.5 438Z" fill="#e5829e"/>
    <path d="M36 436 Q39 434.5 41 436 M42 434.5 Q45 434 46.5 436.5 M37 439.5 Q40 438 43 440 M44 439 Q46 438.5 47.5 440" stroke="#c0587a" stroke-width="0.6" fill="none"/>
  </svg>
  <div class="a" style="left:63.7px;top:425px;width:26px;height:26px;border-radius:50%;background:radial-gradient(circle at 50% 35%,#9094f0,#5a5ed8 70%,#4a4ec8)"></div>
  <svg style="left:0;top:0" width="240" height="520">
    <path d="M64.5 445.5 Q76.5 442 89 445.5 Q86 450.5 76.5 451 Q67.5 450.5 64.5 445.5Z" fill="#8fa0ff" opacity="0.8"/>
    <path d="M70.5 432.5 Q78 428.5 85.5 436 Q86.5 439.5 85 441.5 Z" fill="#e87a98"/>
    <path d="M70.5 432.5 Q77 436 85 441.5 Q78 439 72 434.5Z" fill="#7a2a48"/>
    <path d="M77.5 437.5 L72.5 445 Q71.5 446.5 70.3 445.3" stroke="#e05a80" stroke-width="0.9" fill="none"/>
  </svg>
  <div class="a" style="left:99.3px;top:425px;width:26px;height:26px;border-radius:50%;background:#ededed"></div>
  <svg style="left:0;top:0" width="240" height="520">
    <circle cx="111.8" cy="438.3" r="7.5" fill="#f9c23c"/>
    <path d="M106.5 439 Q111.8 442 117 439 Q116 444 111.8 444.3 Q107.5 444 106.5 439Z" fill="#6a3a20"/>
    <path d="M107.5 440 Q111.8 441.8 116 440 L115.5 441.5 Q111.8 442.8 108 441.5Z" fill="#fff"/>
    <path d="M106.5 436 L109 435.5 L106.8 434.5 M117 436 L114.5 435.5 L116.8 434.5" stroke="#5a3a20" stroke-width="0.9" fill="none"/>
    <ellipse cx="104.5" cy="440.5" rx="1.6" ry="2.2" fill="#4aa8f0"/>
    <ellipse cx="119" cy="440.5" rx="1.6" ry="2.2" fill="#4aa8f0"/>
  </svg>
  <div class="a" style="left:134.5px;top:425px;width:26px;height:26px;border-radius:50%;background:#ededed"></div>
  <svg style="left:139px;top:431px" width="17" height="15" viewBox="0 0 17 15"><path d="M8.5 14.8 L1.8 7.8 A4.1 4.1 0 0 1 8.5 2.3 A4.1 4.1 0 0 1 15.2 7.8Z" fill="#e8191e"/><ellipse cx="5" cy="5" rx="1.6" ry="1" fill="#ff7a70" opacity="0.7"/></svg>
  <div class="a" style="left:169.9px;top:425px;width:26px;height:26px;border-radius:50%;background:#ededed"></div>
  <svg style="left:174px;top:429px" width="18" height="18" viewBox="0 0 18 18"><circle cx="8" cy="10" r="6" stroke="#666" stroke-width="1.1" fill="none"/><circle cx="6" cy="9" r="0.8" fill="#666"/><circle cx="10" cy="9" r="0.8" fill="#666"/><path d="M5 11.5 Q8 14.5 11 11.5" stroke="#666" stroke-width="1" fill="none"/><path d="M14 1 V6 M11.5 3.5 H16.5" stroke="#666" stroke-width="1.1"/></svg>
  <div class="a nw" style="left:53px;top:461.5px;width:15.7px;height:5.2px;border-radius:2.6px;background:#8a8a8a;font-size:4.4px;font-weight:bold;color:#fff;text-align:center;line-height:5.2px">BETA</div>
  <div class="a nw" style="left:70.2px;top:461.2px;font-size:5.7px;color:#888">Genmoji may create unexpected results.</div>
  <div class="a pill" style="left:28px;top:474px;width:139px;height:22px;border-radius:11px;background:#fff"></div>
  <svg style="left:32px;top:478px" width="14" height="14" viewBox="0 0 14 14"><g fill="none" stroke-width="1.2"><circle cx="7" cy="3.5" r="2.5" stroke="#f07050"/><circle cx="10.5" cy="5.5" r="2.5" stroke="#f070a0"/><circle cx="10.5" cy="9" r="2.5" stroke="#c070f0"/><circle cx="7" cy="10.5" r="2.5" stroke="#6a8af0"/><circle cx="3.5" cy="9" r="2.5" stroke="#40b0f0"/><circle cx="3.5" cy="5.5" r="2.5" stroke="#f09050"/></g></svg>
  <div class="a nw" style="left:50px;top:480.8px;font-size:8.1px;color:#b0b0b0">Describe a Genmoji</div>
  <div class="a btn" style="left:173.5px;top:473px;width:23px;height:23px;background:#fff"></div>
  <div class="a" style="left:183px;top:480px;width:4.2px;height:4.2px;border-radius:50%;background:#f06050"></div>
  <div class="a" style="left:181px;top:485px;width:8.4px;height:4px;border-radius:4px 4px 1px 1px;background:linear-gradient(180deg,#b080e0,#50a0f0)"></div>
</div></div>

</body></html>
